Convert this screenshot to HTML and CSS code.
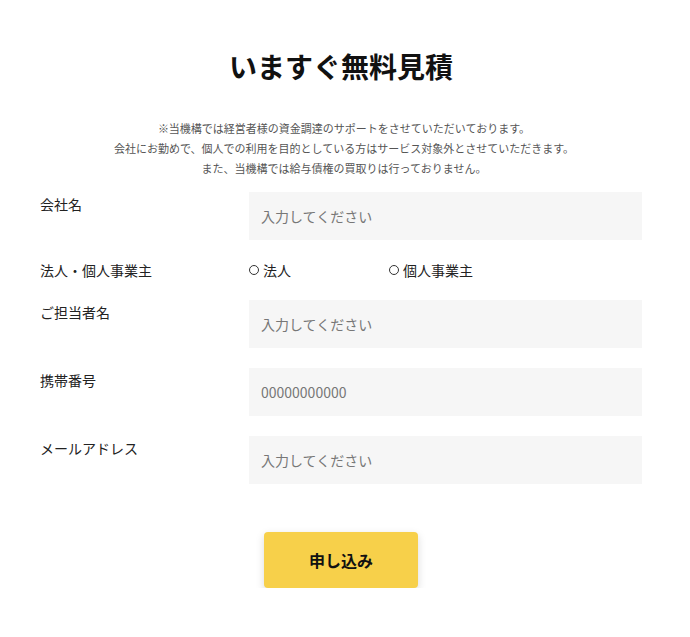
FILE: index.html
```html
<!DOCTYPE html>
<html lang="ja">
<head>
<meta charset="utf-8">
<link rel="stylesheet" href="styles.css">
</head>
<body>
<main class="page">
  <h1 class="title">いますぐ無料見積</h1>
  <p class="note">※当機構では経営者様の資金調達のサポートをさせていただいております。<br>会社にお勤めで、個人での利用を目的としている方はサービス対象外とさせていただきます。<br>また、当機構では給与債権の買取りは行っておりません。</p>
  <form class="form">
    <div class="row">
      <label class="label">会社名</label>
      <div class="field"><input class="input" placeholder="入力してください"></div>
    </div>
    <div class="row row-radio">
      <label class="label">法人・個人事業主</label>
      <div class="field radios">
        <span class="radio"><span class="dot"></span>法人</span>
        <span class="radio"><span class="dot"></span>個人事業主</span>
      </div>
    </div>
    <div class="row">
      <label class="label">ご担当者名</label>
      <div class="field"><input class="input" placeholder="入力してください"></div>
    </div>
    <div class="row">
      <label class="label">携帯番号</label>
      <div class="field"><input class="input" placeholder="00000000000"></div>
    </div>
    <div class="row">
      <label class="label">メールアドレス</label>
      <div class="field"><input class="input" placeholder="入力してください"></div>
    </div>
    <div class="actions">
      <button type="button" class="submit">申し込み</button>
    </div>
  </form>
</main>
</body>
</html>
```
FILE: styles.css
```css
* { box-sizing: border-box; }
html, body { margin: 0; padding: 0; background: #fff; }
body {
  font-family: "Noto Sans CJK JP", "Noto Sans", sans-serif;
  color: #222;
}
.page {
  width: 690px;
  padding: 44px 48px 0 40px;
}
.title {
  margin: 0;
  text-align: center;
  font-size: 28px;
  line-height: 44px;
  font-weight: 700;
  color: #111;
  padding-left: 0;
}
.note {
  margin: 30px 0 0;
  text-align: center;
  font-size: 11px;
  line-height: 20px;
  color: #555;
  padding-left: 6px;
}
.form {
  margin-top: 14px;
}
.row {
  display: flex;
  align-items: flex-start;
  margin-bottom: 20px;
}
.label {
  width: 209px;
  flex: none;
  font-size: 14px;
  line-height: 24px;
  color: #222;
}
.field { flex: 1; }
.input {
  display: block;
  width: 393px;
  height: 48px;
  border: none;
  background: #f6f6f6;
  padding: 0 12px;
  font-family: "Noto Sans CJK JP", "Noto Sans", sans-serif;
  font-size: 14px;
  color: #333;
  outline: none;
}
.input::placeholder { color: #777; }
.row-radio { height: 20px; align-items: center; }
.row-radio .label { line-height: 20px; }
.radios { display: flex; font-size: 14px; line-height: 20px; color: #222; }
.radio { display: inline-flex; align-items: center; width: 140px; }
.dot {
  width: 10px; height: 10px;
  border: 1px solid #333;
  border-radius: 50%;
  margin-right: 4px;
}
.actions {
  display: flex;
  justify-content: center;
  padding-top: 28px;
}
.submit {
  width: 154px;
  height: 56px;
  border: none;
  border-radius: 4px;
  background: #f7d04a;
  box-shadow: 0 3px 8px rgba(0,0,0,0.15);
  font-family: "Noto Sans CJK JP", "Noto Sans", sans-serif;
  font-size: 16px;
  font-weight: 700;
  color: #111;
}
```
